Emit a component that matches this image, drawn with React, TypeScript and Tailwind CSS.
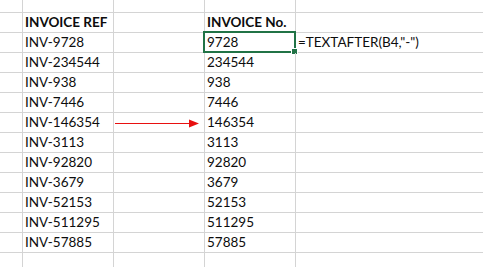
const rows = [
  ['INV-9728', '9728'],
  ['INV-234544', '234544'],
  ['INV-938', '938'],
  ['INV-7446', '7446'],
  ['INV-146354', '146354'],
  ['INV-3113', '3113'],
  ['INV-92820', '92820'],
  ['INV-3679', '3679'],
  ['INV-52153', '52153'],
  ['INV-511295', '511295'],
  ['INV-57885', '57885'],
]

const cell = 'relative border-r border-b border-[#d4d4d4] flex items-end pl-[2px] pb-[3px] leading-none whitespace-nowrap'

export default function App() {
  return (
    <div
      className="w-[483px] h-[267px] overflow-hidden bg-white text-[13.5px] text-[#0d0d0d]"
      style={{ fontFamily: 'Lato, "Liberation Sans", sans-serif' }}
    >
      <div className="grid grid-cols-[23px_91px_91px_91px_1fr] grid-rows-[13px_repeat(12,20px)_1fr] h-full">
        {/* top partial row */}
        <div className={cell} />
        <div className={cell} />
        <div className={cell} />
        <div className={cell} />
        <div className="border-b border-[#d4d4d4]" />

        {/* header */}
        <div className={cell} />
        <div className={cell + ' font-bold'}>INVOICE REF</div>
        <div className={cell} />
        <div className={cell + ' font-bold'}>INVOICE No.</div>
        <div className="border-b border-[#d4d4d4]" />

        {rows.map(([ref, num], i) => (
          <div key={ref} className="contents">
            <div className={cell} />
            <div className={cell}>{ref}</div>
            <div className={cell}>
              {i === 4 && (
                <svg className="absolute left-[1px] top-[5px] overflow-visible" width="84" height="10" viewBox="0 0 84 10">
                  <line x1="0" y1="5.5" x2="76" y2="5.5" stroke="#e81010" strokeWidth="1" />
                  <polygon points="74,1.5 84,5.5 74,9.5" fill="#e81010" />
                </svg>
              )}
            </div>
            <div className={cell}>
              {num}
              {i === 0 && (
                <div className="absolute -left-[2px] -top-[2px] -right-[1px] -bottom-[1px] border-2 border-[#217346]">
                  <div className="absolute -right-[4px] -bottom-[4px] w-[7px] h-[7px] bg-[#217346] border border-white" />
                </div>
              )}
            </div>
            <div className="border-b border-[#d4d4d4] flex items-end pl-[2px] pb-[3px] leading-none whitespace-nowrap">
              {i === 0 ? '=TEXTAFTER(B4,"-")' : ''}
            </div>
          </div>
        ))}

        {/* bottom partial row */}
        <div className="border-r border-[#d4d4d4]" />
        <div className="border-r border-[#d4d4d4]" />
        <div className="border-r border-[#d4d4d4]" />
        <div className="border-r border-[#d4d4d4]" />
        <div />
      </div>
    </div>
  )
}
